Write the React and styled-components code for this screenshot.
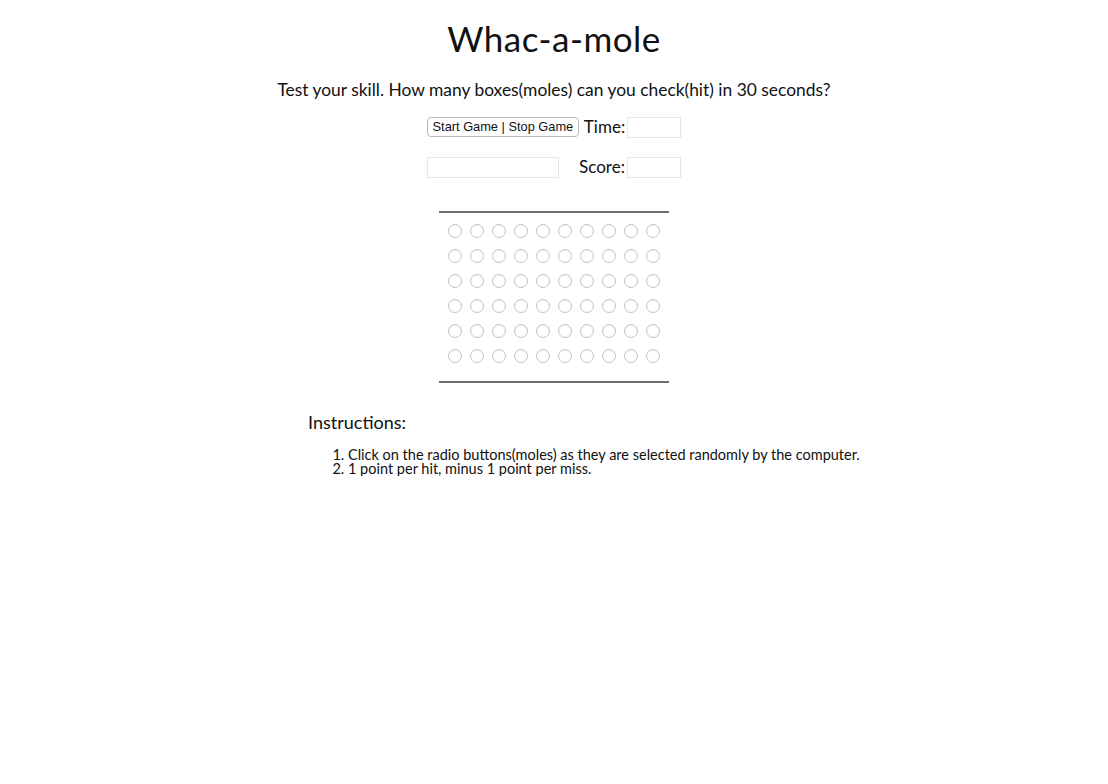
import React from 'react';
import styled, { createGlobalStyle } from 'styled-components';

const GlobalStyle = createGlobalStyle`
  html, body {
    margin: 0;
    padding: 0;
    background: #fff;
  }
  body {
    font-family: "Lato", "DejaVu Sans", sans-serif;
    color: #111;
  }
`;

const Page = styled.div`
  width: 1108px;
  display: flex;
  flex-direction: column;
  align-items: center;
  padding-top: 16px;
`;

const Title = styled.h1`
  margin: 0;
  font-size: 35px;
  font-weight: 400;
  line-height: 44px;
  letter-spacing: 0.5px;
`;

const Subtitle = styled.p`
  margin: 19px 0 0;
  font-size: 17.4px;
  line-height: 22px;
`;

const Controls = styled.div`
  display: flex;
  align-items: center;
  margin-top: ${(p) => p.top}px;
  height: 22px;
`;

const Button = styled.button`
  height: 20px;
  width: 152px;
  padding: 0;
  border: 1px solid #b8b8b8;
  border-radius: 4px;
  background: #fff;
  font-family: "Liberation Sans", Arial, sans-serif;
  font-size: 12.8px;
  color: #111;
  line-height: 18px;
  margin-right: 5px;
`;

const Label = styled.span`
  font-size: 17px;
  line-height: 22px;
  margin-right: 2px;
`;

const Field = styled.input`
  box-sizing: border-box;
  width: ${(p) => p.w}px;
  height: 21px;
  border: 1px solid #e6e6e6;
  border-radius: 0;
  padding: 0;
  margin: 0 ${(p) => p.after || 0}px 0 0;
  background: #fff;
`;

const Board = styled.div`
  margin-top: 33px;
  width: 230px;
  border-top: 2px solid #707070;
  border-bottom: 2px solid #707070;
  padding: 11px 0 18px;
  display: grid;
  grid-template-columns: repeat(10, 14px);
  grid-auto-rows: 14px;
  column-gap: 8px;
  row-gap: 11px;
  justify-content: center;
`;

const Mole = styled.input.attrs({ type: 'radio' })`
  appearance: none;
  -webkit-appearance: none;
  box-sizing: border-box;
  margin: 0;
  width: 14px;
  height: 14px;
  border-radius: 50%;
  border: 1px solid #c4c4c4;
  background: #fff;
  box-shadow: inset 0 1px 1px rgba(0, 0, 0, 0.05);
`;

const Instructions = styled.section`
  align-self: flex-start;
  margin: 28px 0 0 308px;
`;

const InstructionsTitle = styled.h3`
  margin: 0;
  font-size: 18px;
  font-weight: 400;
  line-height: 22px;
`;

const Steps = styled.ol`
  margin: 15px 0 0;
  padding-left: 40px;
  font-size: 14.5px;
  line-height: 14px;
`;

const rows = Array.from({ length: 6 });
const cols = Array.from({ length: 10 });

const App = () => (
  <>
    <GlobalStyle />
    <Page>
      <Title>Whac-a-mole</Title>
      <Subtitle>Test your skill. How many boxes(moles) can you check(hit) in 30 seconds?</Subtitle>
      <Controls top={15}>
        <Button>Start Game | Stop Game</Button>
        <Label>Time:</Label>
        <Field w={54} />
      </Controls>
      <Controls top={18}>
        <Field w={132} after={20} />
        <Label>Score:</Label>
        <Field w={54} />
      </Controls>
      <Board>
        {rows.map((_, r) =>
          cols.map((__, c) => <Mole key={`${r}-${c}`} name="moles" />)
        )}
      </Board>
      <Instructions>
        <InstructionsTitle>Instructions:</InstructionsTitle>
        <Steps>
          <li>Click on the radio buttons(moles) as they are selected randomly by the computer.</li>
          <li>1 point per hit, minus 1 point per miss.</li>
        </Steps>
      </Instructions>
    </Page>
  </>
);

export default App;
